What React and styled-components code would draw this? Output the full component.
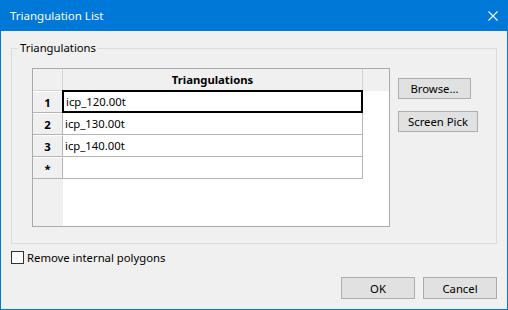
import styled, { createGlobalStyle } from "styled-components";

const GlobalStyle = createGlobalStyle`
  * { box-sizing: border-box; }
  body {
    margin: 0;
    font-family: "Noto Sans", "Liberation Sans", sans-serif;
    font-size: 11.3px;
    color: #000;
    background: #fff;
  }
`;

const rows = ["icp_120.00t", "icp_130.00t", "icp_140.00t"];

const App = () => {
  return (
    <>
      <GlobalStyle />
      <Window>
        <TitleBar>
          <Title>Triangulation List</Title>
          <CloseIcon viewBox="0 0 10 10">
            <path d="M0.5 0.5 L9.5 9.5 M9.5 0.5 L0.5 9.5" />
          </CloseIcon>
        </TitleBar>
        <Body>
          <Group>
            <Legend>Triangulations</Legend>
            <GroupInner>
              <Grid>
                <Corner />
                <ColHeader>Triangulations</ColHeader>
                <HeaderFill />
                {rows.map((name, i) => (
                  <Row key={name}>
                    <RowHeader>{i + 1}</RowHeader>
                    <Cell $selected={i === 0}>{name}</Cell>
                    <Blank />
                  </Row>
                ))}
                <Row>
                  <RowHeader>*</RowHeader>
                  <Cell />
                  <Blank />
                </Row>
                <FillerHeader />
                <FillerCell />
              </Grid>
              <SideButtons>
                <Button $w={73}>Browse...</Button>
                <Button $w={80}>Screen Pick</Button>
              </SideButtons>
            </GroupInner>
          </Group>
          <CheckRow>
            <CheckBox />
            <span>Remove internal polygons</span>
          </CheckRow>
          <Footer>
            <Button $w={74} $h={22}>OK</Button>
            <Button $w={74} $h={22}>Cancel</Button>
          </Footer>
        </Body>
      </Window>
    </>
  );
};

const Window = styled.div`
  width: 508px;
  height: 310px;
  border: 1px solid #0078d7;
  background: #f0f0f0;
  display: flex;
  flex-direction: column;
`;

const TitleBar = styled.div`
  height: 30px;
  background: #0078d7;
  display: flex;
  align-items: center;
  justify-content: space-between;
  padding: 0 9px 1px 9px;
  color: #fff;
`;

const Title = styled.span`
  font-size: 11.5px;
`;

const CloseIcon = styled.svg`
  width: 10px;
  height: 10px;
  margin-top: 1px;
  stroke: #fff;
  stroke-width: 1.1;
  fill: none;
`;

const Body = styled.div`
  flex: 1;
  display: flex;
  flex-direction: column;
  padding: 9px 10px 10px 10px;
`;

const Group = styled.fieldset`
  margin: 0;
  padding: 0;
  height: 204px;
  border: 1px solid #dcdcdc;
  min-width: 0;
`;

const Legend = styled.legend`
  margin-left: 6px;
  padding: 0 2px;
  line-height: 16px;
`;

const GroupInner = styled.div`
  display: flex;
  align-items: flex-start;
  gap: 8px;
  padding: 12px 0 0 20px;
`;

const Grid = styled.div`
  width: 358px;
  height: 159px;
  border: 1px solid #ababab;
  background: #fff;
  display: grid;
  grid-template-columns: 30px 300px 1fr;
  grid-template-rows: 22px 22px 22px 22px 22px 1fr;
`;

const Corner = styled.div`
  background: #f0f0f0;
  border-right: 1px solid #d4d4d4;
  border-bottom: 1px solid #d4d4d4;
`;

const ColHeader = styled.div`
  background: #f0f0f0;
  border-right: 1px solid #d4d4d4;
  border-bottom: 1px solid #d4d4d4;
  font-weight: bold;
  display: flex;
  align-items: center;
  justify-content: center;
`;

const HeaderFill = styled.div`
  background: #f0f0f0;
`;

const Row = styled.div`
  display: contents;
`;

const RowHeader = styled.div`
  background: #f0f0f0;
  border-right: 1px solid #b4b4b4;
  border-bottom: 1px solid #b4b4b4;
  border-top: 1px solid #fff;
  font-weight: bold;
  display: flex;
  align-items: center;
  justify-content: center;
`;

const Cell = styled.div`
  border-right: 1px solid #b4b4b4;
  border-bottom: 1px solid #b4b4b4;
  display: flex;
  align-items: center;
  padding-left: 2px;
  ${({ $selected }) =>
    $selected &&
    `
    border: 2px solid #000;
    margin: -1px 0 0 -1px;
    padding-left: 2px;
  `}
`;

const Blank = styled.div``;

const FillerHeader = styled.div`
  background: #f0f0f0;
`;

const FillerCell = styled.div`
  grid-column: 2 / 4;
`;

const SideButtons = styled.div`
  display: flex;
  flex-direction: column;
  align-items: flex-start;
  gap: 12px;
  padding-top: 10px;
`;

const Button = styled.button`
  width: ${({ $w }) => $w}px;
  height: ${({ $h }) => $h || 21}px;
  background: #e1e1e1;
  border: 1px solid #adadad;
  font-family: inherit;
  font-size: 11.3px;
  color: #000;
  padding: 0;
`;

const CheckRow = styled.label`
  display: flex;
  align-items: center;
  gap: 3px;
  margin-top: 5px;
  height: 16px;
`;

const CheckBox = styled.span`
  width: 13px;
  height: 13px;
  border: 1px solid #333;
  background: #fff;
`;

const Footer = styled.div`
  margin-top: auto;
  display: flex;
  justify-content: flex-end;
  gap: 8px;
`;

export default App;
